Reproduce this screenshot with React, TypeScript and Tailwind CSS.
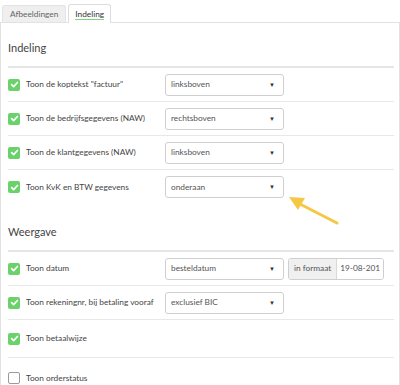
import React from "react";

const Check = ({ on }: { on: boolean }) =>
  on ? (
    <span className="flex h-[12px] w-[12px] items-center justify-center rounded-[2px] bg-[#6bd16b]">
      <svg width="9" height="9" viewBox="0 0 10 10">
        <path d="M1.8 5.2 L4 7.3 L8.3 2.8" fill="none" stroke="white" strokeWidth="1.9" strokeLinecap="round" strokeLinejoin="round" />
      </svg>
    </span>
  ) : (
    <span className="h-[12px] w-[12px] rounded-[2px] border border-[#9a9a9a] bg-white" />
  );

const Select = ({ value }: { value: string }) => (
  <div className="flex h-[22px] w-[119px] items-center justify-between rounded-[3px] border border-[#cfcfcf] bg-white pl-[5px] pr-[8px] text-[#555]">
    <span>{value}</span>
    <span className="text-[6px] leading-none text-[#333]">▼</span>
  </div>
);

const Row = ({
  label,
  on = true,
  children,
  last = false,
}: {
  label: string;
  on?: boolean;
  children?: React.ReactNode;
  last?: boolean;
}) => (
  <div className={`flex h-[34px] items-center ${last ? "" : "border-b border-[#e8e8e8]"}`}>
    <div className="flex w-[157px] items-center gap-[6px]">
      <Check on={on} />
      <span className="text-[#444]">{label}</span>
    </div>
    {children}
  </div>
);

export default function App() {
  return (
    <div
      className="relative h-[385px] w-[400px] overflow-hidden bg-white text-[8.3px]"
      style={{ fontFamily: "Lato, 'Open Sans', sans-serif" }}
    >
      <div className="flex h-[22px] items-end gap-[2px] pl-[2px]">
        <div className="flex h-[17px] items-center rounded-t-[3px] border border-b-0 border-[#e4e4e4] bg-[#efefef] px-[7px] text-[#666]">
          Afbeeldingen
        </div>
        <div className="relative z-10 -mb-px flex h-[19px] items-center rounded-t-[3px] border border-b-0 border-[#ddd] bg-white px-[6px] text-[#333]">
          <span className="border-b border-[#7ed67e] leading-[10px]">Indeling</span>
        </div>
      </div>
      <div className="h-[400px] border border-[#e2e2e2] pl-[7px] pr-[5px]">
        <div className="flex h-[45px] items-end border-b-2 border-[#e6e6e6] pb-[10px] text-[11px] text-[#444]">
          Indeling
        </div>
        <Row label={'Toon de koptekst "factuur"'}>
          <Select value="linksboven" />
        </Row>
        <Row label="Toon de bedrijfsgegevens (NAW)">
          <Select value="rechtsboven" />
        </Row>
        <Row label="Toon de klantgegevens (NAW)">
          <Select value="linksboven" />
        </Row>
        <Row label="Toon KvK en BTW gegevens" last>
          <Select value="onderaan" />
        </Row>
        <div className="flex h-[48px] items-end border-b-2 border-[#e6e6e6] pb-[10px] text-[11px] text-[#444]">
          Weergave
        </div>
        <Row label="Toon datum">
          <Select value="besteldatum" />
          <div className="ml-[4px] flex h-[22px] overflow-hidden rounded-[3px] border border-[#cfcfcf]">
            <div className="flex items-center border-r border-[#d8d8d8] bg-[#f0f0f0] px-[5px] text-[#555]">in formaat</div>
            <div className="flex items-center whitespace-nowrap bg-white px-[3px] text-[#555]">19-08-201</div>
          </div>
        </Row>
        <Row label="Toon rekeningnr, bij betaling vooraf">
          <Select value="exclusief BIC" />
        </Row>
        <div className="flex h-[38px] items-center border-b border-[#e8e8e8]">
          <div className="flex items-center gap-[6px]">
            <Check on={true} />
            <span className="text-[#444]">Toon betaalwijze</span>
          </div>
        </div>
        <div className="flex h-[40px] items-center">
          <div className="flex items-center gap-[6px]">
            <Check on={false} />
            <span className="text-[#444]">Toon orderstatus</span>
          </div>
        </div>
      </div>
      <svg className="absolute left-[280px] top-[190px]" width="70" height="45" viewBox="0 0 70 45">
        <line x1="57" y1="33" x2="16" y2="12" stroke="#f6c744" strokeWidth="3" strokeLinecap="round" />
        <polygon points="9,7 25,8 18,20" fill="#f6c744" />
      </svg>
    </div>
  );
}
